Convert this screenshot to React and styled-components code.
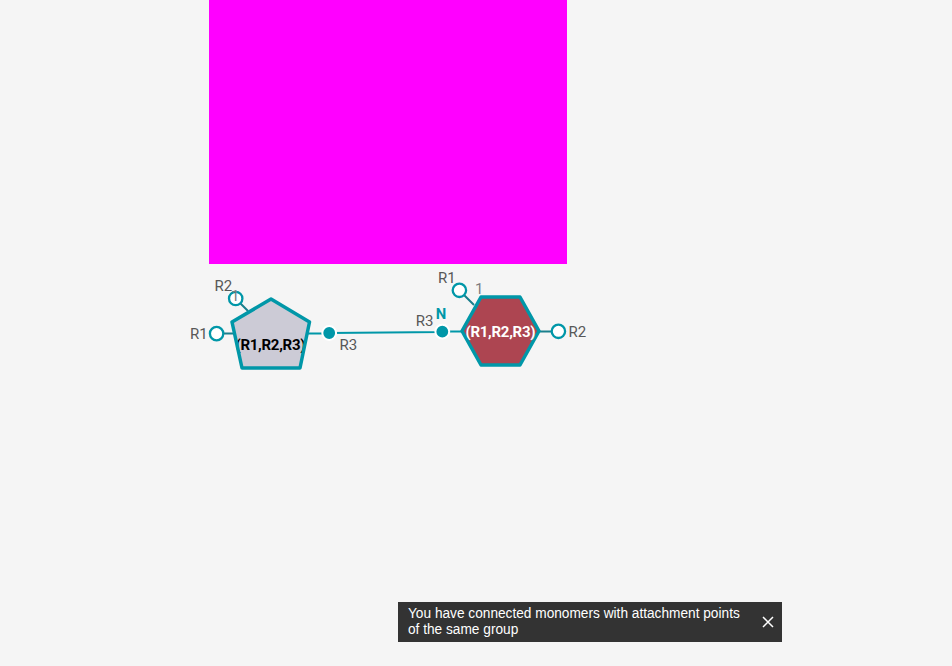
import React from 'react';
import styled, { createGlobalStyle } from 'styled-components';

const Global = createGlobalStyle`
  * { box-sizing: border-box; }
  body { margin: 0; background: #f5f5f5; font-family: "Liberation Sans", Arial, sans-serif; overflow: hidden; }
`;
const Page = styled.main`
  position: relative;
  width: 952px;
  height: 666px;
  background: #f5f5f5;
`;
const Preview = styled.div`
  width: 358px;
  height: 264px;
  margin-left: 209px;
  background: #f0f;
`;
const Canvas = styled.svg`
  display: block;
  width: 952px;
  height: 120px;
`;
const Glyphs = styled.text`
  font-family: Roboto, "Liberation Sans", Arial, sans-serif;
  font-size: ${(p) => p.$size || 15}px;
  font-weight: ${(p) => (p.$bold ? 700 : 400)};
  fill: ${(p) => p.$color || '#585858'};
`;
const Toast = styled.div`
  position: absolute;
  left: 398px;
  top: 602px;
  width: 384px;
  height: 40px;
  display: flex;
  align-items: center;
  justify-content: space-between;
  padding: 0 8px 0 10px;
  background: #333;
  color: #fff;
`;
const Message = styled.p`
  margin: 0;
  width: 341px;
  font-size: 14px;
  line-height: 15px;
  transform: translateY(-0.5px) scale(0.977, 1.07);
  transform-origin: left center;
`;
const Close = styled.button`
  display: flex;
  padding: 0;
  border: 0;
  background: none;
  color: #fff;
`;

const teal = '#0097a8';

export default function App() {
  return (
    <Page>
      <Global />
      <Preview />
      <Canvas viewBox="0 264 952 120">
        <g fill="none" stroke={teal} strokeWidth="2">
          <path d="M308 333.500H329M329 333L442.500 332M442 331.500H463" />
          <path stroke="#1a7f8c" d="M235 298L248 311M217 333.500H234M459 290L474 305M538 331.500H558" />
        </g>
        <g fill="#fff" stroke={teal} strokeWidth="2.300">
          <circle cx="235.700" cy="298.500" r="6.700" />
          <circle cx="216.600" cy="333.600" r="6.700" />
          <circle cx="459.400" cy="290.300" r="6.700" />
          <circle cx="558.400" cy="331.300" r="6.700" />
        </g>
        <g fill={teal} stroke="#fff" strokeWidth="2">
          <circle cx="329.200" cy="333" r="6.900" />
          <circle cx="442.300" cy="331.700" r="6.900" />
        </g>
        <path d="M271 299L309.500 322L300 368H242L232 322Z" fill="#cccbd6" />
        <Glyphs x="235.500" y="350" $bold $color="#000" textLength="70">(R1,R2,R3)</Glyphs>
        <path d="M271 299L309.500 322L300 368H242L232 322Z" fill="none" stroke={teal} strokeWidth="3.500" strokeLinejoin="round" />
        <path d="M481 297H520L539 331L520 365H481L462 331Z" fill="#ad4551" stroke={teal} strokeWidth="3.500" strokeLinejoin="round" />
        <Glyphs x="465.500" y="337" $bold $color="#fff" textLength="70">(R1,R2,R3)</Glyphs>
        <Glyphs x="214.500" y="291">R2</Glyphs>
        <Glyphs x="190" y="339">R1</Glyphs>
        <Glyphs x="339.500" y="350">R3</Glyphs>
        <Glyphs x="415.700" y="326">R3</Glyphs>
        <Glyphs x="438" y="283">R1</Glyphs>
        <Glyphs x="568.500" y="337">R2</Glyphs>
        <Glyphs x="231" y="301" $color="#7c7c7f">1</Glyphs>
        <Glyphs x="475" y="294" $color="#7c7c7f">1</Glyphs>
        <Glyphs x="435.700" y="319" $bold $color={teal} textLength="10.500" lengthAdjust="spacingAndGlyphs">N</Glyphs>
      </Canvas>
      <Toast>
        <Message>You have connected monomers with attachment points of the same group</Message>
        <Close aria-label="Close">
          <svg width="12" height="12" viewBox="0 0 12 12" stroke="currentColor" strokeWidth="1.500"><path d="M1 1L11 11M11 1L1 11" /></svg>
        </Close>
      </Toast>
    </Page>
  );
}
